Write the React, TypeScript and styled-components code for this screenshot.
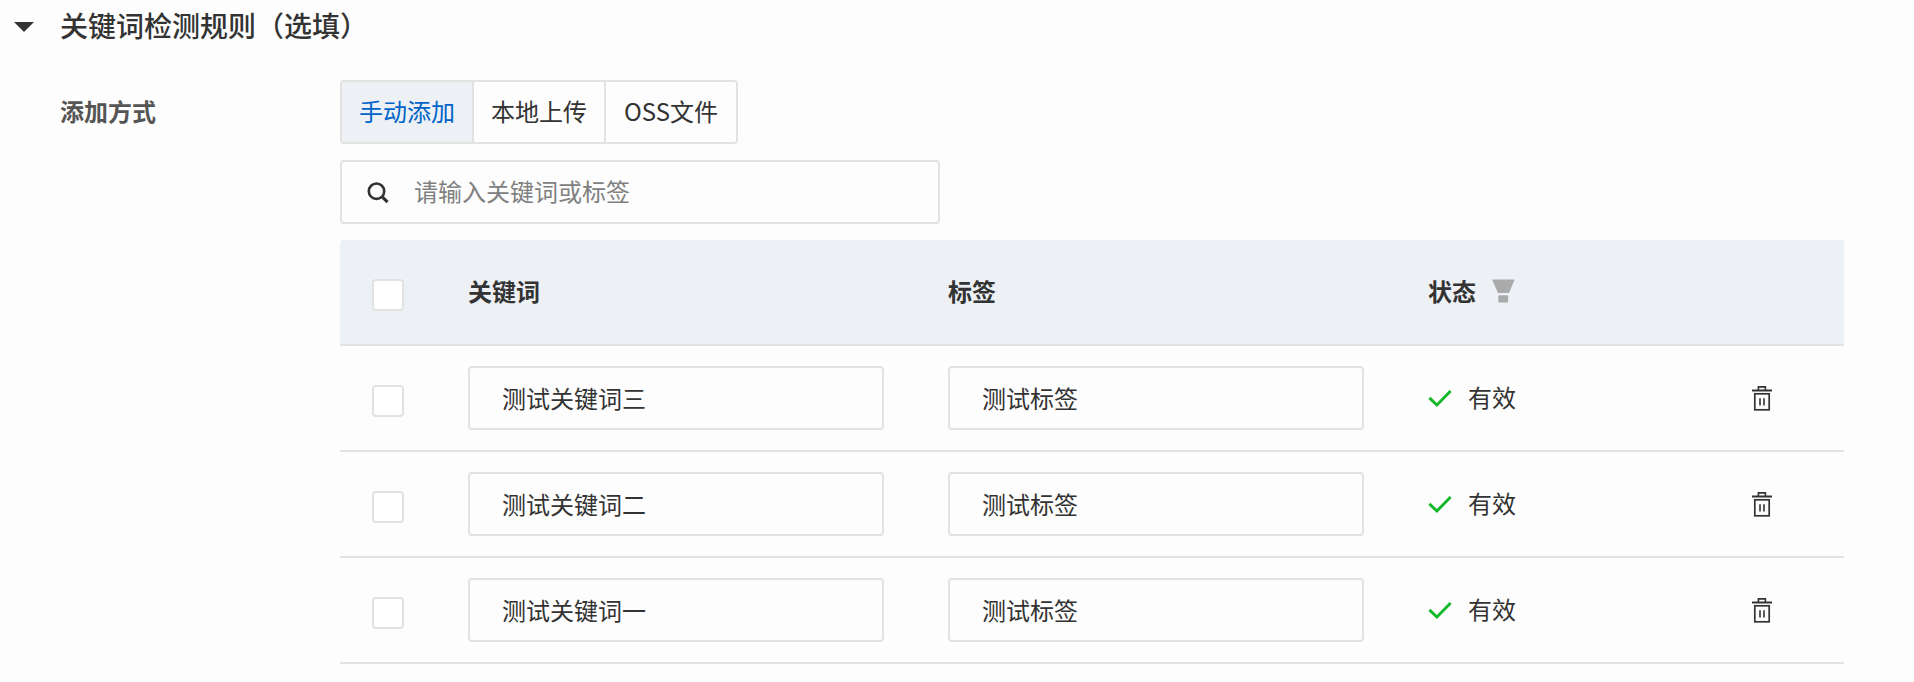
import React, { useState } from "react";
import styled, { createGlobalStyle } from "styled-components";

const color = {
  text: "#333333",
  label: "#555555",
  muted: "#808080",
  border: "#e2e2e2",
  fill: "#edf1f6",
  link: "#0064c8",
  success: "#14b828",
  page: "#fdfdfd",
};

const GlobalStyle = createGlobalStyle`
  *, *::before, *::after { box-sizing: border-box; }
  body {
    margin: 0;
    background: ${color.page};
    color: ${color.text};
    font-family: "Noto Sans CJK SC", sans-serif;
    font-size: 24px;
    line-height: 32px;
  }
  button, input { font: inherit; color: inherit; }
`;

const Section = styled.section`
  padding: 6px 70px 18px 0;
`;

const SectionTitle = styled.h2`
  margin: 0 0 36px;
  font-size: 28px;
  line-height: 38px;
  font-weight: 500;
`;

const CollapseButton = styled.button`
  display: flex;
  align-items: center;
  gap: 26px;
  padding: 0 0 0 14px;
  border: 0;
  background: none;
  cursor: pointer;

  svg {
    margin-top: 4px;
  }
`;

const FormRow = styled.div`
  display: flex;
  padding-left: 60px;
`;

const FormLabel = styled.div`
  flex: 0 0 280px;
  line-height: 62px;
  font-weight: 700;
  color: ${color.label};
`;

const FormContent = styled.div`
  flex: 1;
  min-width: 0;
  display: flex;
  flex-direction: column;
  gap: 16px;
`;

const Segmented = styled.div`
  display: flex;
  align-self: flex-start;
  height: 64px;
  border: 2px solid ${color.border};
  border-radius: 4px;
  overflow: hidden;
`;

const Segment = styled.button<{ $active: boolean }>`
  min-width: 132px;
  padding: 0 16px 2px;
  border: 0;
  background: ${(p) => (p.$active ? color.fill : "transparent")};
  color: ${(p) => (p.$active ? color.link : color.text)};
  cursor: pointer;

  &:first-child {
    min-width: 130px;
  }
  & + & {
    border-left: 2px solid ${color.border};
  }
`;

const SearchBox = styled.label`
  display: flex;
  align-items: center;
  gap: 24px;
  width: 100%;
  max-width: 600px;
  height: 64px;
  padding: 0 24px;
  border: 2px solid ${color.border};
  border-radius: 4px;
`;

const SearchInput = styled.input`
  flex: 1;
  min-width: 0;
  padding: 0 0 2px;
  border: 0;
  outline: 0;
  background: none;

  &::placeholder {
    color: ${color.muted};
    opacity: 1;
  }
`;

const Table = styled.table`
  width: 100%;
  table-layout: fixed;
  border-collapse: separate;
  border-spacing: 0;
`;

const Column = styled.col<{ $width?: number }>`
  width: ${(p) => (p.$width ? `${p.$width}px` : "auto")};
`;

const HeadCell = styled.th`
  height: 106px;
  padding: 20px 32px 22px;
  border-bottom: 2px solid ${color.border};
  background: ${color.fill};
  font-weight: 700;
  text-align: left;

  &:first-child {
    border-top-left-radius: 4px;
  }
`;

const Cell = styled.td`
  height: 106px;
  padding: 20px 32px;
  border-bottom: 2px solid ${color.border};
`;

const Checkbox = styled.input.attrs({ type: "checkbox" })`
  appearance: none;
  display: block;
  width: 32px;
  height: 32px;
  margin: 6px 0 0;
  border: 2px solid ${color.border};
  border-radius: 4px;
  background: #ffffff;

  ${HeadCell} & {
    margin-top: 8px;
  }
  &:checked {
    background: ${color.link};
  }
`;

const TextInput = styled.input.attrs({ type: "text" })`
  display: block;
  width: 100%;
  height: 64px;
  padding: 0 32px 2px;
  border: 2px solid ${color.border};
  border-radius: 4px;
  background: none;
`;

const Inline = styled.div`
  display: flex;
  align-items: center;
  gap: 16px;
`;

const StatusText = styled.span`
  padding-bottom: 2px;
`;

const IconButton = styled.button`
  display: block;
  padding: 0;
  border: 0;
  background: none;
  cursor: pointer;

  svg {
    display: block;
  }
`;

const CaretIcon = () => (
  <svg width="20" height="10" viewBox="0 0 20 10" aria-hidden="true">
    <path d="M0 0H20L10 10Z" fill={color.text} />
  </svg>
);

const SearchIcon = () => (
  <svg width="24" height="24" viewBox="0 0 24 24" fill="none" stroke={color.text} aria-hidden="true">
    <circle cx="10.5" cy="11.2" r="7.7" strokeWidth="2.6" />
    <path d="M16 16.7L21.5 22.2" strokeWidth="3.2" />
  </svg>
);

const FilterIcon = () => (
  <svg width="24" height="24" viewBox="0 0 24 24" fill="#aaaaaa" aria-hidden="true">
    <path d="M1 0.5H21.8Q22.6 0.5 22.3 1.3L17 14H6L0.3 1.3Q0 0.5 1 0.5Z" />
    <rect x="6.3" y="16.2" width="9.8" height="7.4" rx="1" />
  </svg>
);

const CheckIcon = () => (
  <svg width="24" height="18" viewBox="0 0 24 18" fill="none" aria-hidden="true">
    <path d="M1.4 8.9L8.9 16L22.6 2.1" stroke={color.success} strokeWidth="2.9" />
  </svg>
);

const TrashIcon = () => (
  <svg width="20" height="26" viewBox="0 0 20 26" fill="none" stroke={color.text} aria-hidden="true">
    <path d="M0 5.5H20" strokeWidth="2" />
    <path d="M6.4 5.5V1.9H13.4V5.5" strokeWidth="1.6" />
    <rect x="2.8" y="8.8" width="14.4" height="16" strokeWidth="1.7" />
    <path d="M8 13.2V20.6M12 13.2V20.6" strokeWidth="1.6" />
  </svg>
);

const methods = ["手动添加", "本地上传", "OSS文件"];

const rules = [
  { keyword: "测试关键词三", tag: "测试标签", status: "有效" },
  { keyword: "测试关键词二", tag: "测试标签", status: "有效" },
  { keyword: "测试关键词一", tag: "测试标签", status: "有效" },
];

export default function App() {
  const [method, setMethod] = useState(methods[0]);
  const [open, setOpen] = useState(true);

  return (
    <>
      <GlobalStyle />
      <Section>
        <SectionTitle>
          <CollapseButton type="button" aria-expanded={open} onClick={() => setOpen(!open)}>
            <CaretIcon />
            关键词检测规则（选填）
          </CollapseButton>
        </SectionTitle>
        {open && (
          <FormRow>
            <FormLabel id="method-label">添加方式</FormLabel>
            <FormContent>
              <Segmented role="group" aria-labelledby="method-label">
                {methods.map((name) => (
                  <Segment
                    key={name}
                    type="button"
                    $active={name === method}
                    aria-pressed={name === method}
                    onClick={() => setMethod(name)}
                  >
                    {name}
                  </Segment>
                ))}
              </Segmented>
              <SearchBox>
                <SearchIcon />
                <SearchInput type="search" aria-label="搜索" placeholder="请输入关键词或标签" />
              </SearchBox>
              <Table>
                <colgroup>
                  <Column $width={96} />
                  <Column />
                  <Column />
                  <Column $width={324} />
                  <Column $width={124} />
                </colgroup>
                <thead>
                  <tr>
                    <HeadCell>
                      <Checkbox aria-label="全选" />
                    </HeadCell>
                    <HeadCell>关键词</HeadCell>
                    <HeadCell>标签</HeadCell>
                    <HeadCell>
                      <Inline>
                        状态
                        <IconButton type="button" aria-label="筛选">
                          <FilterIcon />
                        </IconButton>
                      </Inline>
                    </HeadCell>
                    <HeadCell />
                  </tr>
                </thead>
                <tbody>
                  {rules.map((rule) => (
                    <tr key={rule.keyword}>
                      <Cell>
                        <Checkbox aria-label={rule.keyword} />
                      </Cell>
                      <Cell>
                        <TextInput aria-label="关键词" defaultValue={rule.keyword} />
                      </Cell>
                      <Cell>
                        <TextInput aria-label="标签" defaultValue={rule.tag} />
                      </Cell>
                      <Cell>
                        <Inline>
                          <CheckIcon />
                          <StatusText>{rule.status}</StatusText>
                        </Inline>
                      </Cell>
                      <Cell>
                        <IconButton type="button" aria-label="删除">
                          <TrashIcon />
                        </IconButton>
                      </Cell>
                    </tr>
                  ))}
                </tbody>
              </Table>
            </FormContent>
          </FormRow>
        )}
      </Section>
    </>
  );
}
